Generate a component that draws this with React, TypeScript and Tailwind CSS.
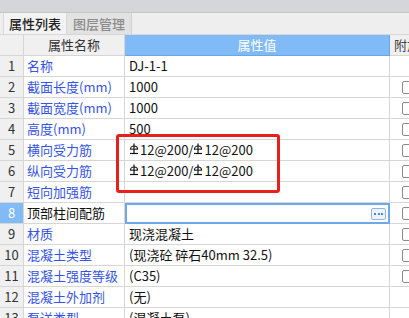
import React from 'react';

type Row = {
  no: number;
  name: string;
  value: React.ReactNode;
  check: boolean;
  plain?: boolean;
  editing?: boolean;
};

function Rebar() {
  return (
    <svg width="10" height="12" viewBox="0 0 10 12" className="inline-block mr-[1px] -mt-[2px] align-middle">
      <line x1="5" y1="0.5" x2="5" y2="11" stroke="#111" strokeWidth="1.2" />
      <path d="M1.5 6 A3.5 3 0 0 1 8.5 6" fill="none" stroke="#111" strokeWidth="1.2" />
      <line x1="1" y1="6.2" x2="9" y2="6.2" stroke="#111" strokeWidth="1" />
      <line x1="1" y1="10.5" x2="9" y2="10.5" stroke="#111" strokeWidth="1.2" />
    </svg>
  );
}

const rebarValue = (
  <span className="inline-flex items-center">
    <Rebar />12@200/<Rebar />12@200
  </span>
);

const rows: Row[] = [
  { no: 1, name: '名称', value: 'DJ-1-1', check: false },
  { no: 2, name: '截面长度(mm)', value: '1000', check: true },
  { no: 3, name: '截面宽度(mm)', value: '1000', check: true },
  { no: 4, name: '高度(mm)', value: '500', check: true },
  { no: 5, name: '横向受力筋', value: rebarValue, check: true },
  { no: 6, name: '纵向受力筋', value: rebarValue, check: true },
  { no: 7, name: '短向加强筋', value: '', check: true },
  { no: 8, name: '顶部柱间配筋', value: '', check: true, plain: true, editing: true },
  { no: 9, name: '材质', value: '现浇混凝土', check: true },
  { no: 10, name: '混凝土类型', value: '(现浇砼 碎石40mm 32.5)', check: true },
  { no: 11, name: '混凝土强度等级', value: '(C35)', check: true },
  { no: 12, name: '混凝土外加剂', value: '(无)', check: false },
  { no: 13, name: '泵送类型', value: '(混凝土泵)', check: false },
];

const cell = 'border-r border-b border-[#d6d6d6] h-[21px] flex items-center overflow-hidden whitespace-nowrap';

export default function App() {
  return (
    <div
      className="relative w-[409px] h-[318px] overflow-hidden bg-white text-[13px] text-[#111]"
      style={{ fontFamily: '"Microsoft YaHei", "Noto Sans CJK SC", "Liberation Sans", sans-serif' }}
    >
      <div className="h-[13px] bg-[#d5d6da] border-b border-[#c4c5c9]" />
      <div className="h-[22px] bg-[#eeeeee] flex pl-[3px] border-b border-[#d6d6d6]">
        <div className="w-[64px] bg-[#f3f3f3] border-x border-[#d9d9d9] flex items-center justify-center text-[#222] font-medium">
          属性列表
        </div>
        <div className="w-[65px] bg-[#e2e2e2] border-r border-[#d2d2d2] flex items-center justify-center text-[#8a8a8a] font-medium">
          图层管理
        </div>
      </div>

      <div className="grid grid-cols-[24px_101px_265px_40px]">
        <div className={`${cell} bg-[#f0f0f0]`} />
        <div className={`${cell} bg-[#f0f0f0] justify-center text-[#333]`}>属性名称</div>
        <div className={`${cell} bg-[#80bbf7] border-r-[#6aa5e6] border-b-[#6aa5e6] justify-center text-white`}>属性值</div>
        <div className={`${cell} bg-[#f0f0f0] pl-[4px] text-[#444]`}>附加</div>

        {rows.map(r => (
          <React.Fragment key={r.no}>
            <div
              className={`${cell} justify-center ${
                r.editing ? 'bg-[#80bbf7] text-white' : 'bg-[#f0f0f0] text-[#333]'
              }`}
            >
              {r.no}
            </div>
            <div className={`${cell} pl-[3px] ${r.plain ? 'text-[#111]' : 'text-[#3553e6]'}`}>{r.name}</div>
            {r.editing ? (
              <div className="h-[21px] border-2 border-[#6ea8e8] flex items-center justify-end pr-[2px]">
                <div className="w-[15px] h-[12px] rounded-[2px] border border-[#8cb8e8] bg-[#eef3fa] flex items-center justify-center gap-[1.5px]">
                  <span className="w-[2px] h-[2px] bg-[#4a86d0]" />
                  <span className="w-[2px] h-[2px] bg-[#4a86d0]" />
                  <span className="w-[2px] h-[2px] bg-[#4a86d0]" />
                </div>
              </div>
            ) : (
              <div className={`${cell} pl-[4px]`}>{r.value}</div>
            )}
            <div className={`${cell} pl-[12px]`}>
              {r.check && <span className="w-[13px] h-[13px] shrink-0 rounded-[2px] border border-[#8a8a8a] bg-white" />}
            </div>
          </React.Fragment>
        ))}
      </div>

      <div className="absolute left-[116px] top-[134px] w-[164px] h-[59px] border-[3px] border-[#e8201c] rounded-[3px]" />
    </div>
  );
}
